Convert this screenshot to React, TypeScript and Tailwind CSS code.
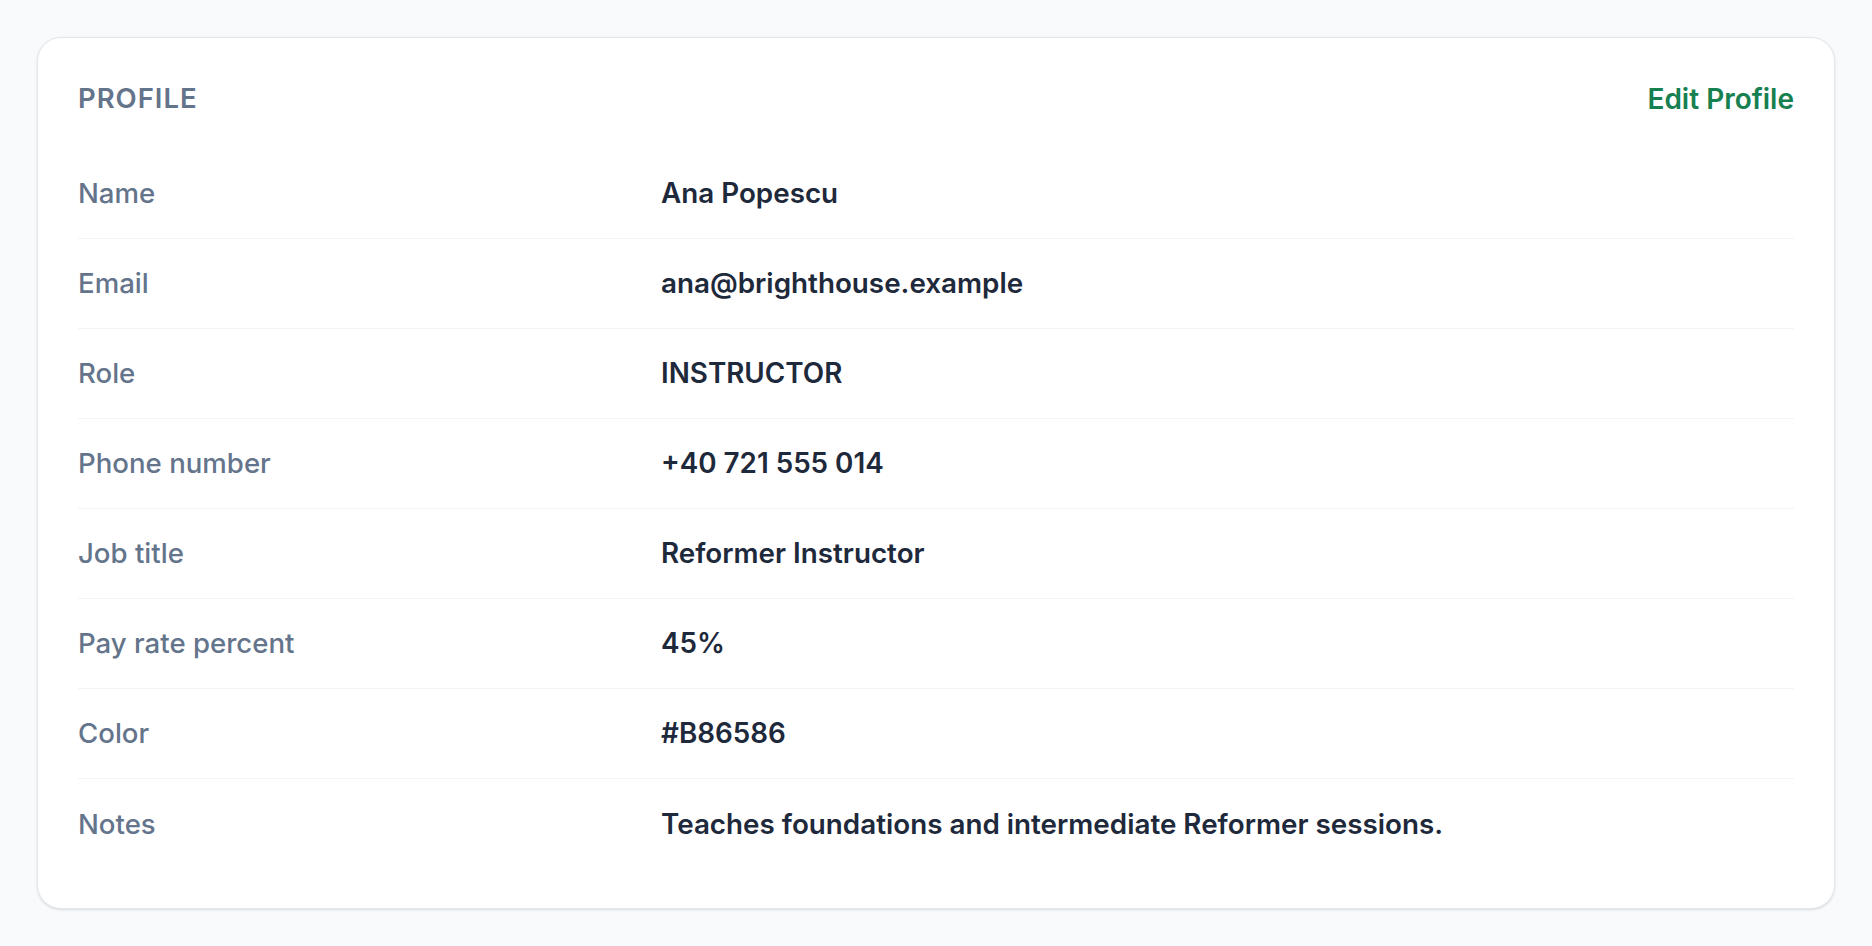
const rows = [
  { label: 'Name', value: 'Ana Popescu' },
  { label: 'Email', value: 'ana@brighthouse.example' },
  { label: 'Role', value: 'INSTRUCTOR' },
  { label: 'Phone number', value: '+40 721 555 014' },
  { label: 'Job title', value: 'Reformer Instructor' },
  { label: 'Pay rate percent', value: '45%' },
  { label: 'Color', value: '#B86586' },
  { label: 'Notes', value: 'Teaches foundations and intermediate Reformer sessions.' },
];

export default function App() {
  return (
    <div
      className="min-h-screen bg-[#f8fafc] px-[37px] py-[37px]"
      style={{ fontFamily: 'Inter, "Noto Sans", sans-serif' }}
    >
      <section className="rounded-[24px] border border-[#e2e8f0] bg-white px-[40px] pt-[39px] pb-[39px] shadow-sm">
        {/* Header */}
        <div className="mb-[30px] flex h-[42px] items-center justify-between">
          <h2 className="pt-[2px] text-[27.5px] font-semibold uppercase tracking-[0.035em] text-[#64748b]">
            Profile
          </h2>
          <button className="pt-[2px] text-[28px] font-semibold text-[#168050]">Edit Profile</button>
        </div>

        {/* Details */}
        <dl>
          {rows.map((row, i) => (
            <div
              key={row.label}
              className={
                'grid h-[90px] grid-cols-[583px_1fr] items-center ' +
                (i < rows.length - 1 ? 'border-b border-[#f1f5f9]' : '')
              }
            >
              <dt className="pt-[1px] text-[27.6px] font-medium text-[#64748b]">{row.label}</dt>
              <dd className="pt-[1px] text-[27.8px] font-semibold text-[#1e293b]">{row.value}</dd>
            </div>
          ))}
        </dl>
      </section>
    </div>
  );
}
